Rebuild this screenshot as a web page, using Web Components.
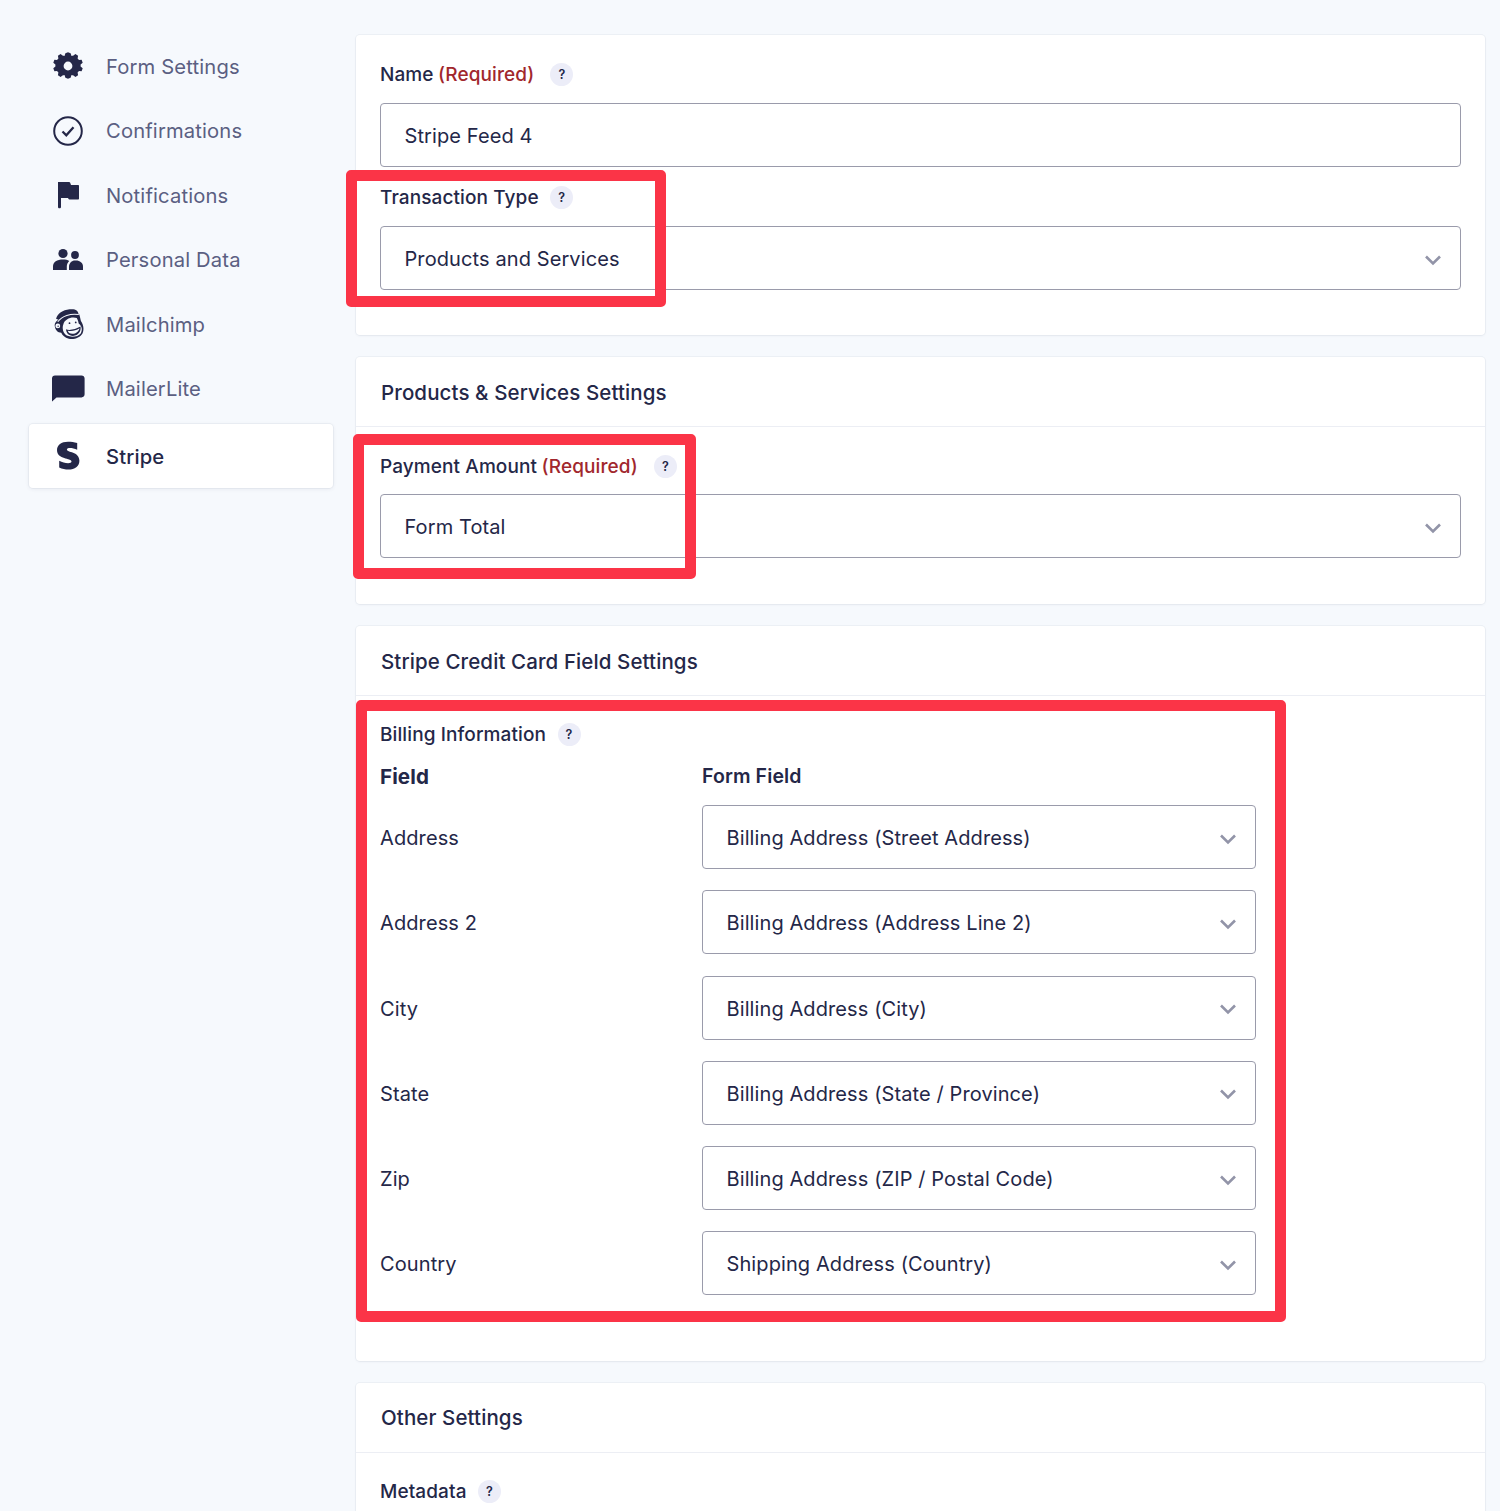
<!DOCTYPE html>
<html>
<head>
<meta charset="utf-8">
<title>Stripe Feed</title>
<style>
    html, body { margin: 0; padding: 0; }
    body {
        background: #f6f9fd;
        font-family: Inter, "Liberation Sans", sans-serif;
        color: #242748;
        height: 1511px;
        overflow: hidden;
    }
</style>
</head>
<body>
<settings-page>
    <side-nav slot="nav">
        <nav-item label="Form Settings" icon="gear"></nav-item>
        <nav-item label="Confirmations" icon="check"></nav-item>
        <nav-item label="Notifications" icon="flag"></nav-item>
        <nav-item label="Personal Data" icon="people"></nav-item>
        <nav-item label="Mailchimp" icon="chimp"></nav-item>
        <nav-item label="MailerLite" icon="bubble"></nav-item>
        <nav-item label="Stripe" icon="stripe" active></nav-item>
    </side-nav>

    <form-card style="--pad-top:25px; --pad-bottom:45px">
        <form-field style="margin-bottom:16px">
            <field-label required help>Name</field-label>
            <field-box>Stripe Feed 4</field-box>
        </form-field>
        <form-field>
            <field-label help>Transaction Type</field-label>
            <field-box arrow>Products and Services</field-box>
        </form-field>
        <mark-box style="left:-10px; top:135px; width:320px; height:137px"></mark-box>
    </form-card>

    <form-card heading="Products &amp; Services Settings" style="--pad-top:25px; --pad-bottom:46px">
        <form-field>
            <field-label required help style="margin-bottom:14px">Payment Amount</field-label>
            <field-box arrow>Form Total</field-box>
        </form-field>
        <mark-box style="left:-3px; top:77px; width:343px; height:145px"></mark-box>
    </form-card>

    <form-card heading="Stripe Credit Card Field Settings" style="--pad-top:24px; --pad-bottom:44px">
        <form-field>
            <field-label help>Billing Information</field-label>
            <map-table>
                <map-row slot="head" field="Field" target="Form Field" head></map-row>
                <map-row field="Address" target="Billing Address (Street Address)"></map-row>
                <map-row field="Address 2" target="Billing Address (Address Line 2)"></map-row>
                <map-row field="City" target="Billing Address (City)"></map-row>
                <map-row field="State" target="Billing Address (State / Province)"></map-row>
                <map-row field="Zip" target="Billing Address (ZIP / Postal Code)"></map-row>
                <map-row field="Country" target="Shipping Address (Country)"></map-row>
            </map-table>
        </form-field>
        <mark-box style="left:0; top:74px; width:930px; height:622px"></mark-box>
    </form-card>

    <form-card heading="Other Settings" style="--pad-top:25px; --pad-bottom:24px">
        <form-field>
            <field-label help>Metadata</field-label>
        </form-field>
    </form-card>
</settings-page>

<script>
const ICONS = {
    gear: `<svg width="30" height="30" viewBox="0 0 30 30"><path fill="#242748" fill-rule="evenodd" d="M15 1.200l2.600 1 .9 2.700 2-.3 1.900-1.600 2.700 1.700-.5 2.700 1.400 1.500 2.600-.1 1.100 3-2.100 1.600v2.200l2.100 1.600-1.100 3-2.600-.1-1.400 1.500.5 2.700-2.700 1.700-1.900-1.600-2-.3-.9 2.700-2.600 1-2.600-1-.9-2.700-2 .3-1.900 1.600-2.700-1.700.5-2.700-1.400-1.500-2.600.1-1.100-3 2.100-1.600v-2.200l-2.100-1.600 1.100-3 2.600.1 1.400-1.500-.5-2.700 2.700-1.700 1.900 1.600 2 .3.9-2.700zM15 10.600a4.400 4.400 0 1 0 0 8.800 4.400 4.400 0 0 0 0-8.800z"/></svg>`,
    check: `<svg width="32" height="32" viewBox="0 0 32 32" fill="none" stroke="#242748"><circle cx="16" cy="16" r="13.800" stroke-width="2"/><path d="M10.500 16.500l3.800 3.800 7.200-8" stroke-width="2.300"/></svg>`,
    flag: `<svg width="26" height="28" viewBox="0 0 26 28"><path fill="#242748" d="M3 1h11c.6 0 1 .3 1.200.8l.8 2.200h7c.6 0 1 .4 1 1v12.500c0 .6-.4 1-1 1h-8.500c-.5 0-.9-.3-1.100-.8l-.4-.7H6V26c0 .8-.6 1.300-1.500 1.300S3 26.800 3 26z"/></svg>`,
    people: `<svg width="32" height="24" viewBox="0 0 32 24"><g fill="#242748"><circle cx="11" cy="5.500" r="4.600"/><circle cx="23" cy="7" r="3.900"/><path d="M1 22v-3.500C1 14 5 11.500 11 11.500c2.500 0 4.600.5 6.200 1.400-1.500 1.400-2.400 3.300-2.400 5.600V22z"/><path d="M17 22v-3.500c0-3.300 2.700-6 6-6h1c3.900 0 7 2.500 7 6V22z"/></g></svg>`,
    chimp: `<svg width="30" height="30" viewBox="27 27 87 87" style="margin-left:2px">
        <path fill="#242748" d="M33 55C38 40 52 30 72 28 88 26 97 30 98 42 85 40 62 44 45 60z"/>
        <path fill="#242748" d="M45 55C58 40 85 35 100 42 103 50 104 58 105 62 112 72 115 85 110 97 103 110 85 116 70 113 58 110 52 104 48 96 38 96 30 88 29 75 28 66 35 60 45 55z"/>
        <path fill="none" stroke="#f6f9fd" stroke-width="3" d="M38 64C50 47 75 39 99 43"/>
        <circle cx="38" cy="76" r="7" fill="#f6f9fd"/>
        <circle cx="39" cy="77" r="2" fill="#242748"/>
        <path fill="#f6f9fd" d="M54 72C57 56 78 48 93 53 97 60 98 66 99 70 108 76 110 88 105 97 97 108 77 110 64 104 53 97 50 82 54 72z"/>
        <circle cx="72" cy="68" r="2.600" fill="#242748"/>
        <circle cx="90" cy="66" r="2.600" fill="#242748"/>
        <path fill="#242748" d="M62 86C72 90 90 86 104 78 106 92 98 104 82 105 70 105 62 97 62 86z"/>
        <path fill="#f6f9fd" d="M67 90C78 93 90 90 101 83 99 93 88 100 80 99 73 99 68 95 67 90z"/>
    </svg>`,
    bubble: `<svg width="34" height="27" viewBox="0 0 34 27"><path fill="#242748" d="M4 .5h26.500c1.800 0 3.100 1.300 3.100 3.100v15.700c0 1.800-1.300 3.100-3.100 3.100H5.500L1.100 26.500h-.1V3.600C1 1.800 2.200.5 4 .5z"/></svg>`,
    stripe: `<svg width="24" height="30" viewBox="0 0 24 30"><path fill="#242748" d="M21.200 2v6.700c-2.600-1-5-1.600-7.400-1.600-1.800 0-2.900.5-2.900 1.500 0 3.300 12.500 1.700 12.500 11.200 0 5.500-4.600 8.800-11 8.800-3 0-6.200-.6-9.200-2v-6.900c2.900 1.600 6 2.500 8.900 2.500 2 0 3.400-.5 3.400-1.700C15.500 17 1 19 1 9.100 1 4 5.300.7 12 .7c3.200 0 6.200.4 9.200 1.300z"/></svg>`
};

function component(name, html) {
    customElements.define(name, class extends HTMLElement {
        constructor() {
            super();
            this.attachShadow({ mode: 'open' });
        }
        connectedCallback() {
            this.shadowRoot.innerHTML = typeof html === 'function' ? html(this) : html;
        }
    });
}

component('settings-page', `
    <style>
        :host { display: flex; align-items: flex-start; padding: 35px 15px 0 29px; gap: 23px; }
        .nav { flex: 0 0 304px; display: block; margin-top: -1px; }
        main { flex: 1 1 0; min-width: 0; display: flex; flex-direction: column; gap: 22px; }
    </style>
    <div class="nav"><slot name="nav"></slot></div>
    <main><slot></slot></main>
`);

component('side-nav', `
    <style>:host { display: flex; flex-direction: column; }</style>
    <slot></slot>
`);

component('nav-item', el => `
    <style>
        :host {
            display: flex; align-items: center; height: 64.500px; box-sizing: border-box;
            font-size: 20.200px; color: #5b5f82; letter-spacing: 0.150px;
        }
        :host([active]) {
            height: 64px; margin-top: 3px; background: #fff; color: #242748; font-weight: 500;
            border-radius: 4px; box-shadow: 0 0 0 1px rgba(36,39,72,.04), 0 1px 4px rgba(36,39,72,.08);
        }
        .icon { flex: 0 0 77px; display: flex; justify-content: center; }
    </style>
    <span class="icon">${ICONS[el.getAttribute('icon')]}</span>
    <span>${el.getAttribute('label')}</span>
`);

component('form-card', el => {
    const heading = el.getAttribute('heading');
    return `
    <style>
        :host {
            display: block; position: relative; background: #fff; border-radius: 4px;
            box-shadow: 0 0 0 1px rgba(36,39,72,.04), 0 1px 3px rgba(36,39,72,.05);
        }
        header {
            height: 70px; box-sizing: border-box; display: flex; align-items: center;
            padding: 1px 25px 0; border-bottom: 1px solid #eceef4;
            font-size: 20.500px; font-weight: 500; letter-spacing: 0.100px;
        }
        .body { padding: var(--pad-top) 24px var(--pad-bottom); }
    </style>
    ${heading ? `<header>${heading.replace('&', '&amp;')}</header>` : ''}
    <div class="body"><slot></slot></div>
`;
});

component('form-field', `
    <style>:host { display: block; }</style>
    <slot></slot>
`);

component('field-label', el => `
    <style>
        :host {
            display: flex; align-items: center; height: 28px; margin-bottom: 15px;
            font-size: 19px; font-weight: 500; letter-spacing: 0.100px; color: #242748;
        }
        .req { color: #a1272d; margin-left: 4.500px; }
        .tip {
            display: inline-flex; align-items: center; justify-content: center;
            width: 23px; height: 23px; border-radius: 50%; background: #ecedf8;
            font-size: 12.500px; font-weight: 600; margin-left: ${el.hasAttribute('required') ? '16px' : '11.500px'};
        }
    </style>
    <slot></slot>
    ${el.hasAttribute('required') ? '<span class="req">(Required)</span>' : ''}
    ${el.hasAttribute('help') ? '<span class="tip">?</span>' : ''}
`);

component('field-box', el => `
    <style>
        :host {
            display: flex; align-items: center; justify-content: space-between;
            height: 64px; box-sizing: border-box; padding: 0 18px 0 23.500px;
            background: #fff; border: 1px solid #9a9bab; border-radius: 4px;
            font-size: 20px; letter-spacing: 0.100px; color: #242748;
        }
        span { padding-top: 2px; }
        svg { flex: none; margin-top: 3px; }
    </style>
    <span><slot></slot></span>
    ${el.hasAttribute('arrow') ? '<svg width="18" height="12" viewBox="0 0 18 12" fill="none"><path d="M2 2.500l7 7 7-7" stroke="#9294a8" stroke-width="2.600"/></svg>' : ''}
`);

component('map-table', `
    <style>:host { display: block; width: 876px; margin-top: -1px; }</style>
    <slot name="head"></slot>
    <slot></slot>
`);

component('map-row', el => {
    const isHead = el.hasAttribute('head');
    return `
    <style>
        :host {
            display: grid; grid-template-columns: 322px 554px; align-items: center;
            margin-bottom: ${isHead ? '0' : '21.300px'}; font-size: 20px; letter-spacing: 0.100px;
        }
        .head { height: 28px; margin-bottom: 15px; display: flex; align-items: center; font-size: 20.600px; font-weight: 700; }
        .head.small { font-size: 19.500px; font-weight: 600; }
        .name { padding-top: 2px; }
    </style>
    ${isHead
        ? `<div class="head">${el.getAttribute('field')}</div><div class="head small">${el.getAttribute('target')}</div>`
        : `<div class="name">${el.getAttribute('field')}</div><field-box arrow>${el.getAttribute('target')}</field-box>`}
`;
});

component('mark-box', `
    <style>
        :host {
            display: block; position: absolute; box-sizing: border-box;
            border: 11px solid #fb3447; border-radius: 5px; pointer-events: none;
        }
    </style>
`);
</script>
</body>
</html>
